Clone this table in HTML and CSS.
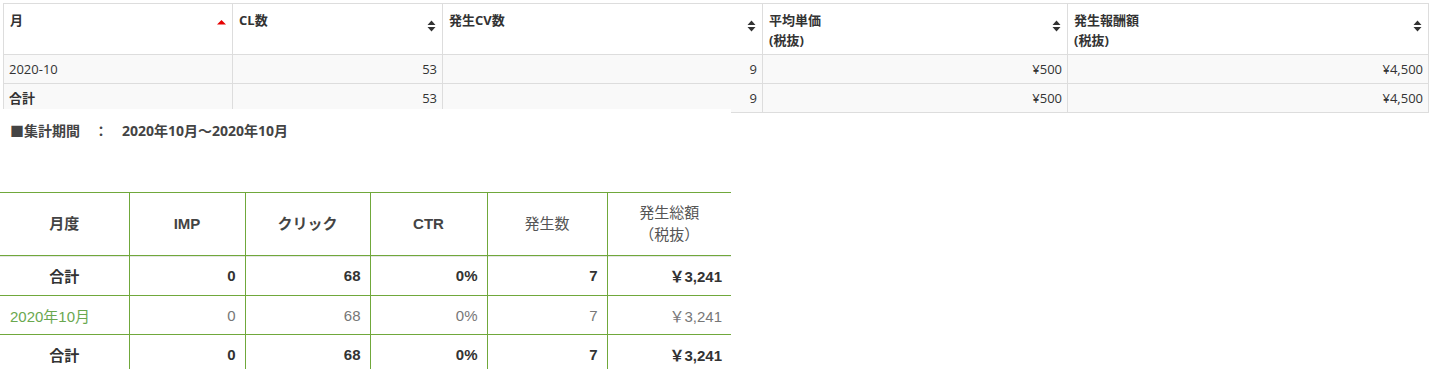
FILE: index.html
```html
<!DOCTYPE html>
<html lang="ja">
<head>
<meta charset="utf-8">
<link rel="stylesheet" href="styles.css">
</head>
<body>
<div class="page">
  <table class="report">
    <colgroup>
      <col class="c1"><col class="c2"><col class="c3"><col class="c4"><col class="c5">
    </colgroup>
    <thead>
      <tr>
        <th><div class="thc"><span>月</span><svg class="sort" width="9" height="12" viewBox="0 0 9 12"><path d="M0 4.5 L4.5 0 L9 4.5 Z" fill="#e60000"/></svg></div></th>
        <th><div class="thc"><span>CL数</span><svg class="sort" width="9" height="12" viewBox="0 0 9 12"><path d="M0.5 5 L4.5 0.5 L8.5 5 Z M0.5 7 L4.5 11.5 L8.5 7 Z" fill="#333"/></svg></div></th>
        <th><div class="thc"><span>発生CV数</span><svg class="sort" width="9" height="12" viewBox="0 0 9 12"><path d="M0.5 5 L4.5 0.5 L8.5 5 Z M0.5 7 L4.5 11.5 L8.5 7 Z" fill="#333"/></svg></div></th>
        <th><div class="thc"><span>平均単価<br>(税抜)</span><svg class="sort" width="9" height="12" viewBox="0 0 9 12"><path d="M0.5 5 L4.5 0.5 L8.5 5 Z M0.5 7 L4.5 11.5 L8.5 7 Z" fill="#333"/></svg></div></th>
        <th><div class="thc"><span>発生報酬額<br>(税抜)</span><svg class="sort" width="9" height="12" viewBox="0 0 9 12"><path d="M0.5 5 L4.5 0.5 L8.5 5 Z M0.5 7 L4.5 11.5 L8.5 7 Z" fill="#333"/></svg></div></th>
      </tr>
    </thead>
    <tbody>
      <tr>
        <td>2020-10</td><td class="num">53</td><td class="num">9</td><td class="num">¥500</td><td class="num">¥4,500</td>
      </tr>
      <tr>
        <td class="b">合計</td><td class="num">53</td><td class="num">9</td><td class="num">¥500</td><td class="num">¥4,500</td>
      </tr>
    </tbody>
  </table>

  <div class="summary">
    <p class="period">■集計期間　：　2020年10月～2020年10月</p>
    <table class="monthly">
      <colgroup>
        <col class="m1"><col class="m2"><col class="m3"><col class="m4"><col class="m5"><col class="m6">
      </colgroup>
      <thead>
        <tr>
          <th>月度</th><th>IMP</th><th>クリック</th><th>CTR</th><th class="lt">発生数</th><th class="lt">発生総額<br>（税抜）</th>
        </tr>
      </thead>
      <tbody>
        <tr class="total first">
          <td class="ctr">合計</td><td>0</td><td>68</td><td>0%</td><td>7</td><td>￥3,241</td>
        </tr>
        <tr class="month">
          <td class="lbl">2020年10月</td><td>0</td><td>68</td><td>0%</td><td>7</td><td>￥3,241</td>
        </tr>
        <tr class="total">
          <td class="ctr">合計</td><td>0</td><td>68</td><td>0%</td><td>7</td><td>￥3,241</td>
        </tr>
      </tbody>
    </table>
  </div>
</div>
</body>
</html>
```

FILE: styles.css
```css
* { box-sizing: border-box; }
html, body { margin: 0; padding: 0; background: #fff; }
body {
  font-family: "Open Sans", "Noto Sans CJK JP", sans-serif;
  color: #333;
}
.page { padding: 3px 2px 0 3px; }

/* top report table */
.report {
  width: 1425px;
  border-collapse: collapse;
  table-layout: fixed;
  font-size: 13px;
  line-height: 20px;
}
.report .c1 { width: 229px; }
.report .c2 { width: 210px; }
.report .c3 { width: 320px; }
.report .c4 { width: 305px; }
.report .c5 { width: 361px; }
.report th, .report td { border: 1px solid #ddd; }
.report th {
  font-weight: bold;
  text-align: left;
  vertical-align: top;
  padding: 6px 6px 4px 6px;
  height: 51px;
  background: #fff;
}
.thc {
  display: flex;
  justify-content: space-between;
  align-items: flex-start;
}
.sort { margin-top: 10px; flex: none; }
.report td {
  background: #f9f9f9;
  padding: 4px 5px;
  height: 29px;
}
.report td.num { text-align: right; }
.report td.b { font-weight: bold; }

/* summary area */
.summary {
  width: 731px;
  margin-left: -3px;
  margin-top: -4px;
  background: #fff;
  padding-top: 12px;
}
.period {
  margin: 0 0 51px 10px;
  font-size: 14px;
  line-height: 20px;
  font-weight: bold;
  color: #444;
}

.monthly {
  width: 731px;
  border-collapse: collapse;
  table-layout: fixed;
  font-family: "Liberation Sans", "Noto Sans CJK JP", sans-serif;
  font-size: 15px;
  color: #333;
}
.monthly .m1 { width: 129px; }
.monthly .m2 { width: 116px; }
.monthly .m3 { width: 125px; }
.monthly .m4 { width: 117px; }
.monthly .m5 { width: 120px; }
.monthly .m6 { width: 124px; }
.monthly th, .monthly td { border: 1px solid #70a83b; }
.monthly tr > :first-child { border-left: none; }
.monthly tr > :last-child { border-right: none; }
.monthly th {
  height: 63px;
  font-weight: bold;
  text-align: center;
  line-height: 22px;
  color: #444;
}
.monthly th.lt { font-weight: normal; color: #555; }
.monthly td {
  text-align: right;
  padding: 0 9px;
  height: 39px;
}
.monthly tr.first td { box-shadow: inset 0 1px 0 #e6e6e6; height: 40px; }
.monthly tr.total td { font-weight: bold; }
.monthly td.ctr { text-align: center; }
.monthly tr.month td { color: #777; }
.monthly tr.month td.lbl { text-align: left; color: #6aa84f; padding-left: 10px; }
```
